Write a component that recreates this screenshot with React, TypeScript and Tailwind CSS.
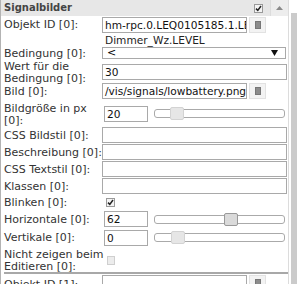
import React from "react";

type P = { children?: React.ReactNode; className?: string };

const Label = ({ children, className = "" }: P) => (
  <div className={`w-[98px] shrink-0 whitespace-nowrap text-[11px] leading-[12px] text-[#333] ${className}`}>{children}</div>
);

const Box = ({ children, className = "" }: P) => (
  <div
    className={`h-[16px] border border-[#a9a9a9] bg-white text-[10.6px] leading-[14px] pl-[2px] overflow-hidden whitespace-nowrap text-[#111] ${className}`}
  >
    {children}
  </div>
);

const PickBtn = () => (
  <div className="ml-[2px] w-[17px] h-[16px] bg-[#f3f3f3] border border-[#e2e2e2] flex items-center justify-center">
    <div className="w-[6px] h-[8px] bg-[#8c8c8c] border border-[#777]" />
  </div>
);

const Check = ({ on }: { on?: boolean }) =>
  on ? (
    <div className="w-[9px] h-[9px] border border-[#9a9a9a] bg-[#f4f4f4] flex items-center justify-center">
      <svg width="7" height="7" viewBox="0 0 7 7">
        <path d="M1 3.6 L2.8 5.4 L6 1" stroke="#222" strokeWidth="1.5" fill="none" />
      </svg>
    </div>
  ) : (
    <div className="w-[8px] h-[9px] border border-[#cfcfcf] bg-[#ececec]" />
  );

const Slider = ({ pos, dark }: { pos: number; dark?: boolean }) => (
  <div className="relative ml-[6px] w-[131px] h-[9px] border border-[#aaa] rounded-[3px] bg-white">
    <div
      className={`absolute top-[-3px] w-[14px] h-[13px] rounded-[2px] border ${
        dark ? "bg-[#dadada] border-[#999]" : "bg-[#e6e6e6] border-[#d3d3d3]"
      }`}
      style={{ left: pos }}
    />
  </div>
);

export default function App() {
  return (
    <div className="w-[297px] h-[284px] overflow-hidden bg-white flex font-['DejaVu_Sans',Verdana,sans-serif]">
      <div className="w-[289px] h-full border-l border-l-[#b3b3b3] border-r border-r-[#dcdcdc] flex flex-col">
        <div className="h-[16px] shrink-0 bg-[#e7e7e7] flex items-center pl-[3px]">
          <div className="text-[10px] font-bold text-[#444] leading-[12px]">Signalbilder</div>
          <div className="ml-auto mr-[7px]">
            <Check on />
          </div>
          <div className="w-[18px] h-[16px] bg-[#ededed] border-l border-[#dcdcdc] flex items-center justify-center">
            <svg width="7" height="4" viewBox="0 0 7 4">
              <path d="M0 4 L3.5 0 L7 4 Z" fill="#8a8a8a" />
            </svg>
          </div>
        </div>

        <div className="pl-[3px] flex flex-col">
          <div className="h-[18px] flex items-center">
            <Label>Objekt ID [0]:</Label>
            <Box className="w-[145px]">hm-rpc.0.LEQ0105185.1.LEVEL</Box>
            <PickBtn />
          </div>
          <div className="relative z-10 h-[13px] pl-[101px] text-[10.6px] leading-[12px] text-[#222]">Dimmer_Wz.LEVEL</div>
          <div className="h-[13px] flex items-start">
            <Label className="mt-[1px]">Bedingung [0]:</Label>
            <div className="w-[184px] h-[12px] border border-[#a9a9a9] bg-white flex items-center pl-[4px] pr-[7px] text-[11px] leading-[10px] text-black">
              <span>&lt;</span>
              <svg className="ml-auto" width="7" height="6" viewBox="0 0 7 6">
                <path d="M0 0 L7 0 L3.5 6 Z" fill="#111" />
              </svg>
            </div>
          </div>
          <div className="h-[23px] flex items-center">
            <Label className="mt-[3px]">
              Wert für die
              <br />
              Bedingung [0]:
            </Label>
            <Box className="w-[185px]">30</Box>
          </div>
          <div className="h-[17px] flex items-start">
            <Label className="mt-[3px]">Bild [0]:</Label>
            <Box className="w-[145px]">/vis/signals/lowbattery.png</Box>
            <PickBtn />
          </div>
          <div className="h-[27px] flex items-center">
            <Label className="mt-[3px]">
              Bildgröße in px
              <br />
              [0]:
            </Label>
            <Box className="ml-[2px] w-[44px]">20</Box>
            <Slider pos={15} />
          </div>
          {["CSS Bildstil [0]:", "Beschreibung [0]:", "CSS Textstil [0]:", "Klassen [0]:"].map((t) => (
            <div key={t} className="h-[17px] flex items-start">
              <Label className="mt-[3px]">{t}</Label>
              <Box className="w-[185px]" />
            </div>
          ))}
          <div className="h-[15px] flex items-center">
            <Label className="mt-[1px]">Blinken [0]:</Label>
            <div className="ml-[4px] mt-[-1px]">
              <Check on />
            </div>
          </div>
          <div className="h-[18px] flex items-center">
            <Label className="mt-[1px]">Horizontale [0]:</Label>
            <Box className="ml-[2px] w-[44px]">62</Box>
            <Slider pos={69} dark />
          </div>
          <div className="h-[19px] flex items-center">
            <Label>Vertikale [0]:</Label>
            <Box className="ml-[2px] w-[44px]">0</Box>
            <Slider pos={16} />
          </div>
          <div className="h-[25px] flex items-center">
            <Label className="mt-[2px]">
              Nicht zeigen beim
              <br />
              Editieren [0]:
            </Label>
            <div className="ml-[5px] mt-[2px]">
              <Check />
            </div>
          </div>
        </div>
        <div className="ml-[3px] h-[2px] bg-[#a8a8a8] shrink-0" />
        <div className="pl-[3px] pt-[1px] flex items-start">
          <Label className="mt-[4px]">Objekt ID [1]:</Label>
          <Box className="w-[145px]" />
          <PickBtn />
        </div>
      </div>
      <div className="ml-[2px] mt-[13px] w-[6px] h-full bg-[#cbcbcb]" />
    </div>
  );
}
